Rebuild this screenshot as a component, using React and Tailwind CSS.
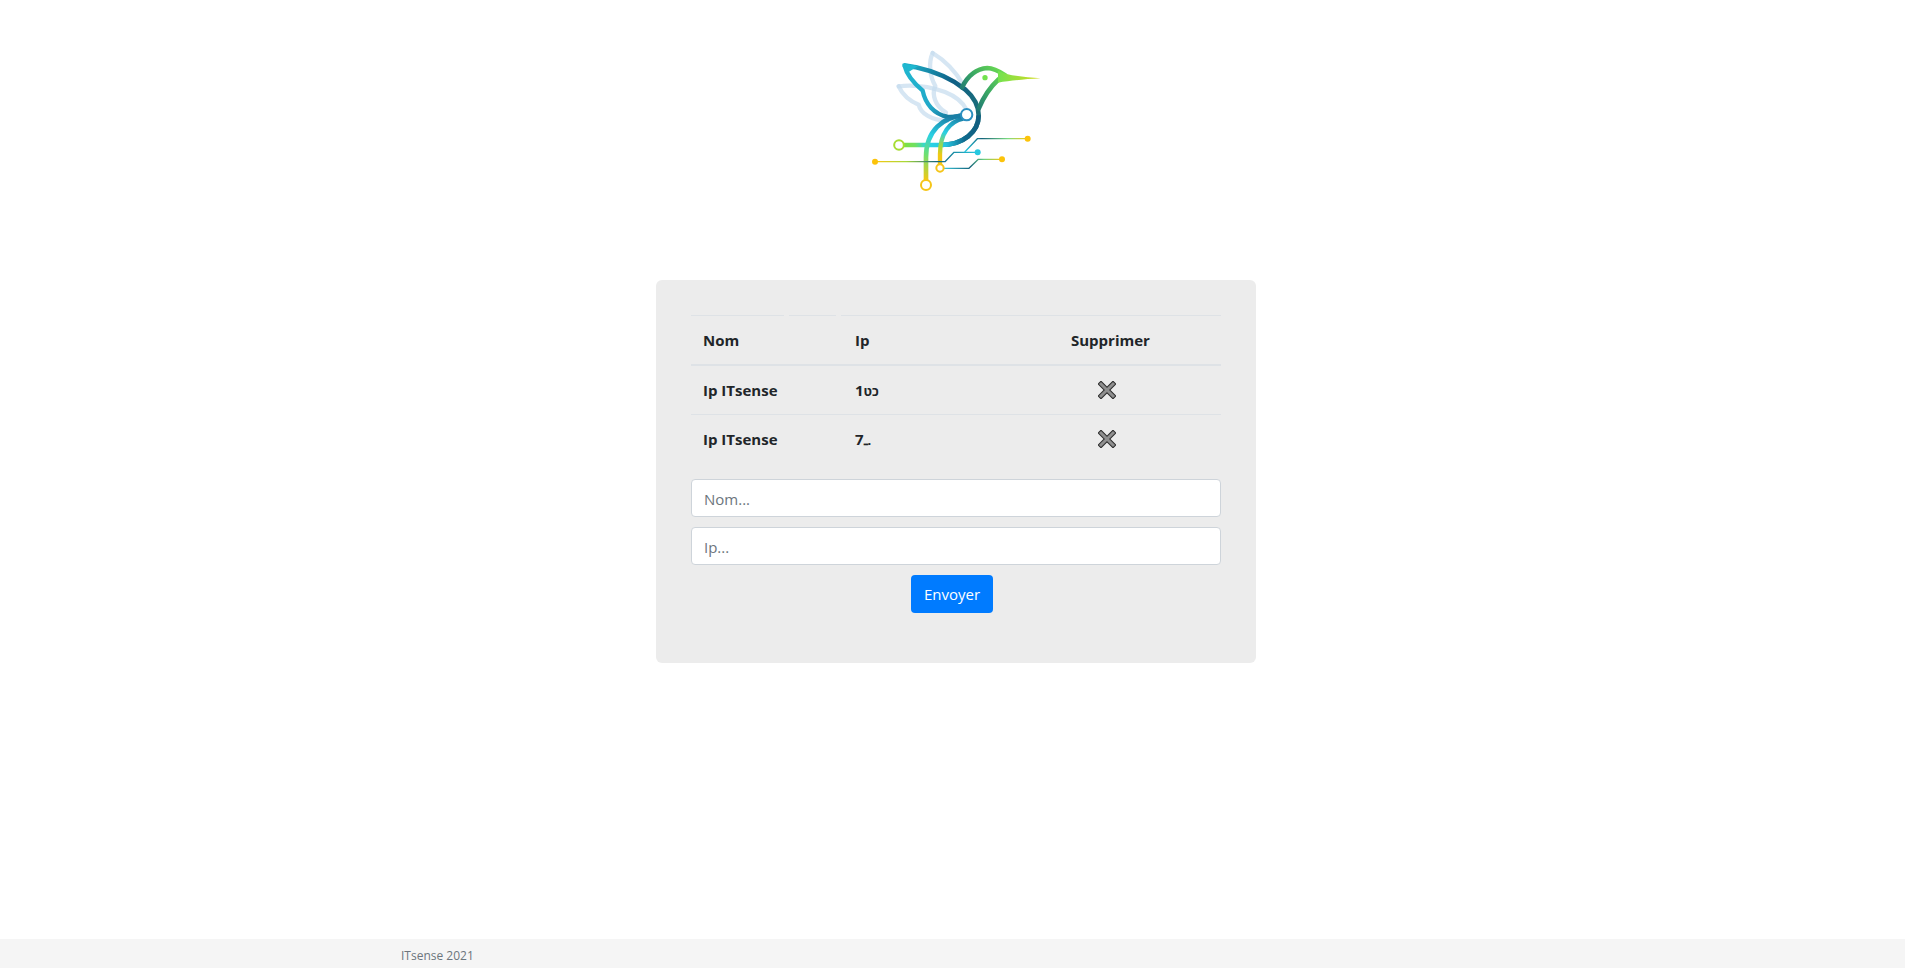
import React from 'react';

function Logo() {
    return (
        <svg viewBox="0 0 630 510" className="block w-[210px] h-[170px] ml-[850px]" fill="none" strokeLinecap="round">
            <defs>
                <linearGradient id="wing" gradientUnits="userSpaceOnUse" x1="157" y1="100" x2="390" y2="260">
                    <stop offset="0" stopColor="#1fb8d0" />
                    <stop offset="0.55" stopColor="#0f5f85" />
                    <stop offset="1" stopColor="#1c7078" />
                </linearGradient>
                <linearGradient id="wingLow" gradientUnits="userSpaceOnUse" x1="157" y1="100" x2="340" y2="270">
                    <stop offset="0" stopColor="#1fb8d0" />
                    <stop offset="0.6" stopColor="#22a8c8" />
                    <stop offset="1" stopColor="#0f5f85" />
                </linearGradient>
                <linearGradient id="head" gradientUnits="userSpaceOnUse" x1="340" y1="230" x2="470" y2="120">
                    <stop offset="0" stopColor="#13647c" />
                    <stop offset="0.5" stopColor="#3aa864" />
                    <stop offset="1" stopColor="#72e24e" />
                </linearGradient>
                <linearGradient id="beak" gradientUnits="userSpaceOnUse" x1="440" y1="140" x2="572" y2="145">
                    <stop offset="0" stopColor="#6fe252" />
                    <stop offset="1" stopColor="#d8dc20" />
                </linearGradient>
                <linearGradient id="belly" gradientUnits="userSpaceOnUse" x1="160" y1="345" x2="385" y2="300">
                    <stop offset="0" stopColor="#7fe040" />
                    <stop offset="0.15" stopColor="#6fe060" />
                    <stop offset="0.3" stopColor="#2bd6e6" />
                    <stop offset="0.55" stopColor="#25c4e0" />
                    <stop offset="0.8" stopColor="#0f6a8e" />
                    <stop offset="1" stopColor="#125f80" />
                </linearGradient>
                <linearGradient id="legA" gradientUnits="userSpaceOnUse" x1="300" y1="262" x2="228" y2="450">
                    <stop offset="0" stopColor="#1a7fa6" />
                    <stop offset="0.35" stopColor="#2ad0e4" />
                    <stop offset="0.65" stopColor="#6fe070" />
                    <stop offset="1" stopColor="#f2c814" />
                </linearGradient>
                <linearGradient id="legB" gradientUnits="userSpaceOnUse" x1="330" y1="262" x2="270" y2="400">
                    <stop offset="0" stopColor="#1a7fa6" />
                    <stop offset="0.4" stopColor="#2ad0e4" />
                    <stop offset="0.7" stopColor="#a8d838" />
                    <stop offset="0.85" stopColor="#f2c814" />
                </linearGradient>
                <linearGradient id="lineA" gradientUnits="userSpaceOnUse" x1="75" y1="395" x2="383" y2="367">
                    <stop offset="0" stopColor="#f8c810" />
                    <stop offset="0.3" stopColor="#a8d838" />
                    <stop offset="0.6" stopColor="#15647c" />
                    <stop offset="1" stopColor="#26c8e0" />
                </linearGradient>
                <linearGradient id="lineB" gradientUnits="userSpaceOnUse" x1="345" y1="365" x2="533" y2="326">
                    <stop offset="0" stopColor="#26c8e0" />
                    <stop offset="0.3" stopColor="#15647c" />
                    <stop offset="0.7" stopColor="#7cdc80" />
                    <stop offset="1" stopColor="#f8c810" />
                </linearGradient>
                <linearGradient id="lineC" gradientUnits="userSpaceOnUse" x1="280" y1="415" x2="456" y2="388">
                    <stop offset="0" stopColor="#3ac8dc" />
                    <stop offset="0.45" stopColor="#15647c" />
                    <stop offset="0.7" stopColor="#6cd080" />
                    <stop offset="1" stopColor="#f8c810" />
                </linearGradient>
            </defs>

            {/* faded back wings */}
            <g stroke="#c4dcee" strokeOpacity="0.7" strokeWidth="13" strokeLinejoin="round">
                <path d="M248 69C292 96 320 130 338 162" />
                <path d="M248 69C234 100 240 140 256 168C244 195 256 228 288 248" />
                <path d="M146 169C190 164 240 170 285 186C315 198 338 214 350 240" />
                <path d="M146 169C158 195 182 214 206 224C212 250 245 272 292 272" />
            </g>

            {/* main wing */}
            <path d="M164 106C176 108 188 110 198 112C262 126 310 150 345 178C370 200 386 226 386 256C386 306 340 345 272 345" stroke="url(#wing)" strokeWidth="14" />
            <path d="M156 101L204 108L176 126Z" fill="#1fb8d0" />
            <path d="M164 108C170 134 190 158 218 182C226 222 252 252 292 260C310 262 326 258 340 255" stroke="url(#wingLow)" strokeWidth="13" />

            {/* belly and left node */}
            <path d="M160 345H272C340 345 386 306 386 256" stroke="url(#belly)" strokeWidth="14" strokeLinecap="butt" />

            {/* legs */}
            <path d="M338 256C280 262 228 300 228 382V450" stroke="url(#legA)" strokeWidth="14" strokeLinecap="butt" />
            <path d="M340 266C300 274 270 310 270 372V402" stroke="url(#legB)" strokeWidth="13" strokeLinecap="butt" />

            {/* head and beak */}
            <path d="M336 172C354 136 382 116 412 114C432 114 448 124 466 136" stroke="url(#head)" strokeWidth="14" />
            <path d="M446 148C422 170 402 198 386 236" stroke="url(#head)" strokeWidth="14" />
            <path d="M444 122C470 136 520 141 572 145C520 148 480 152 444 158Z" fill="url(#beak)" />
            <circle cx="405" cy="143" r="8" fill="#72e24e" />

            {/* circuit traces */}
            <g strokeWidth="4" strokeLinejoin="round">
                <path d="M75 395H285L312 367H383" stroke="url(#lineA)" />
                <path d="M345 365L382 326H533" stroke="url(#lineB)" />
                <path d="M280 415H357L385 388H456" stroke="url(#lineC)" />
            </g>
            <circle cx="75" cy="395" r="9" fill="#fcc30a" />
            <circle cx="383" cy="367" r="9" fill="#26c8e0" />
            <circle cx="533" cy="326" r="9" fill="#fcc30a" />
            <circle cx="456" cy="388" r="9" fill="#fcc30a" />

            {/* round nodes */}
            <circle cx="147" cy="345" r="14.5" fill="#fff" stroke="#a6dc32" strokeWidth="6" />
            <circle cx="228" cy="465" r="15" fill="#fff" stroke="#f5c518" strokeWidth="6" />
            <circle cx="270" cy="414" r="11" fill="#fff" stroke="#f5c518" strokeWidth="6" />
            <circle cx="350" cy="254" r="17" fill="#fff" stroke="#2a8fc0" strokeWidth="6" />
        </svg>
    );
}

function DeleteIcon() {
    return (
        <svg viewBox="0 0 18 18" className="w-[18px] h-[18px] block">
            <path d="M3 3L15 15M15 3L3 15" stroke="#2b2b2b" strokeWidth="5" strokeLinecap="square" />
            <path d="M3 3L15 15M15 3L3 15" stroke="#8f8f8f" strokeWidth="3" strokeLinecap="square" />
        </svg>
    );
}

const rows = [
    { name: 'Ip ITsense', first: '1', rest: 'כט' },
    { name: 'Ip ITsense', first: '7', rest: 'ـ.' },
];

export default function App() {
    return (
        <div className="min-h-screen bg-white flex flex-col font-['Open_Sans','Noto_Sans',sans-serif] text-[#212529]">
            <div className="flex-1 pt-[30px]">
                <Logo />

                <div className="ml-[656px] mt-[80px] w-[600px] h-[383px] bg-[#ececec] rounded-md px-[35px] pt-[35px]">
                    <div className="flex gap-[5px] h-px">
                        <div className="w-[93px] bg-[#dee2e6]" />
                        <div className="w-[47px] bg-[#dee2e6]" />
                        <div className="flex-1 bg-[#dee2e6]" />
                    </div>
                    <table className="w-[530px] table-fixed border-collapse text-[15px] font-bold">
                        <colgroup>
                            <col className="w-[152px]" />
                            <col className="w-[216px]" />
                            <col className="w-[162px]" />
                        </colgroup>
                        <thead>
                            <tr className="h-[49px] border-b-2 border-[#dee2e6]">
                                <th className="px-3 text-left font-bold">Nom</th>
                                <th className="px-3 text-left font-bold">Ip</th>
                                <th className="px-3 text-left font-bold">Supprimer</th>
                            </tr>
                        </thead>
                        <tbody>
                            {rows.map((r, i) => (
                                <tr key={i} className={`h-[49px] ${i === 0 ? 'border-b border-[#dee2e6]' : ''}`}>
                                    <td className="px-3">{r.name}</td>
                                    <td className="px-3">{r.first}<span className="text-[13px]">{r.rest}</span></td>
                                    <td className="px-3"><div className="ml-[27px]"><DeleteIcon /></div></td>
                                </tr>
                            ))}
                        </tbody>
                    </table>

                    <div className="mt-[16px] flex flex-col gap-[10px]">
                        <input placeholder="Nom..." className="w-full h-[38px] px-3 pt-[2px] bg-white border border-[#ced4da] rounded text-[15px] placeholder:text-[#6c757d] outline-none" />
                        <input placeholder="Ip..." className="w-full h-[38px] px-3 pt-[2px] bg-white border border-[#ced4da] rounded text-[15px] placeholder:text-[#6c757d] outline-none" />
                    </div>
                    <button className="block ml-[220px] mt-[10px] w-[82px] h-[38px] bg-[#007bff] text-white text-[15px] rounded">Envoyer</button>
                </div>
            </div>

            <footer className="h-[29px] bg-[#f5f5f5] pl-[401px] pt-[6px] text-[12px] leading-[22px] text-[#6c757d]">
                ITsense 2021
            </footer>
        </div>
    );
}
